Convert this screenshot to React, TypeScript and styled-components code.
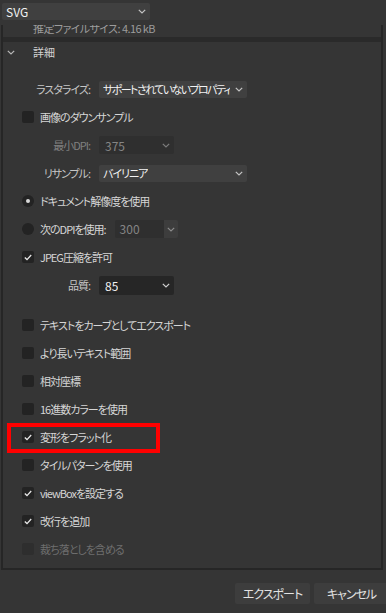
import styled, { createGlobalStyle, css } from "styled-components";

const GlobalStyle = createGlobalStyle`
  html, body {
    margin: 0;
    padding: 0;
    background: #353535;
  }
  body {
    font-family: "Noto Sans CJK JP", "Noto Sans", sans-serif;
    font-size: 11px;
    letter-spacing: -1px;
    font-feature-settings: "palt";
    color: #d6d6d6;
  }
`;

const Chevron = ({ color = "#c4c4c4" }: { color?: string }) => (
  <svg width="8" height="5" viewBox="0 0 8 5">
    <polyline
      points="0.8,0.8 4,4 7.2,0.8"
      fill="none"
      stroke={color}
      strokeWidth="1.2"
    />
  </svg>
);

const Check = () => (
  <svg width="8" height="7" viewBox="0 0 8 7">
    <polyline
      points="0.8,3.6 3,5.6 7.2,1"
      fill="none"
      stroke="#e8e8e8"
      strokeWidth="1.3"
    />
  </svg>
);

type selectVariant = "normal" | "disabled" | "dark";

const checkRows: {
  text: string;
  checked?: boolean;
  disabled?: boolean;
  highlighted?: boolean;
}[] = [
  { text: "テキストをカーブとしてエクスポート" },
  { text: "より長いテキスト範囲" },
  { text: "相対座標" },
  { text: "16進数カラーを使用" },
  { text: "変形をフラット化", checked: true, highlighted: true },
  { text: "タイルパターンを使用" },
  { text: "viewBoxを設定する", checked: true },
  { text: "改行を追加", checked: true },
  { text: "裁ち落としを含める", disabled: true },
];

export default function App() {
  return (
    <Page>
      <GlobalStyle />
      <TopArea>
        <Select width={148} variant="normal">
          <SelectText latin>SVG</SelectText>
          <Chevron />
        </Select>
      </TopArea>

      <Frame>
        <EstimateRow>推定ファイルサイズ: 4.16 kB</EstimateRow>
        <SectionBand />
        <SectionHeader>
          <HeaderChevron>
            <Chevron color="#b8b8b8" />
          </HeaderChevron>
          <SectionTitle>詳細</SectionTitle>
        </SectionHeader>

        <SectionBody>
          <FieldRow>
            <FieldLabel>ラスタライズ:</FieldLabel>
            <Select width={148} variant="normal">
              <SelectText tight>サポートされていないプロパティ</SelectText>
              <Chevron />
            </Select>
          </FieldRow>

          <CheckRow>
            <Box />
            <CheckText>画像のダウンサンプル</CheckText>
          </CheckRow>

          <FieldRow>
            <FieldLabel disabled>最小DPI:</FieldLabel>
            <Select width={75} variant="disabled">
              <SelectText latin>375</SelectText>
              <Chevron color="#7c7c7c" />
            </Select>
          </FieldRow>

          <FieldRow>
            <FieldLabel>リサンプル:</FieldLabel>
            <Select width={148} variant="normal">
              <SelectText>バイリニア</SelectText>
              <Chevron />
            </Select>
          </FieldRow>

          <CheckRow>
            <Radio selected />
            <CheckText>ドキュメント解像度を使用</CheckText>
          </CheckRow>

          <CheckRow>
            <Radio />
            <CheckText>次のDPIを使用:</CheckText>
            <SpinBox>
              <SpinValue>300</SpinValue>
              <SpinButton>
                <Chevron color="#8a8a8a" />
              </SpinButton>
            </SpinBox>
          </CheckRow>

          <CheckRow>
            <Box checked>
              <Check />
            </Box>
            <CheckText>JPEG圧縮を許可</CheckText>
          </CheckRow>

          <FieldRow>
            <FieldLabel>品質:</FieldLabel>
            <Select width={75} variant="dark">
              <SelectText latin>85</SelectText>
              <Chevron color="#d0d0d0" />
            </Select>
          </FieldRow>

          <GroupGap />

          {checkRows.map((item) => (
            <CheckRow key={item.text}>
              <Box checked={item.checked} disabled={item.disabled}>
                {item.checked && <Check />}
              </Box>
              <CheckText disabled={item.disabled}>{item.text}</CheckText>
              {item.highlighted && <Highlight />}
            </CheckRow>
          ))}
        </SectionBody>
      </Frame>

      <Footer>
        <Button>エクスポート</Button>
        <Button>キャンセル</Button>
      </Footer>
    </Page>
  );
}

const Page = styled.div`
  width: 386px;
  height: 613px;
  overflow: hidden;
  display: flex;
  flex-direction: column;
`;

const TopArea = styled.div`
  height: 25px;
  box-sizing: border-box;
  padding: 3px 0 0 2px;
`;

const Select = styled.div<{ width: number; variant: selectVariant }>`
  width: ${(props) => props.width}px;
  height: 17px;
  box-sizing: border-box;
  display: flex;
  align-items: center;
  justify-content: space-between;
  padding: 0 4px 0 4px;
  border-radius: 2px;
  ${(props) =>
    props.variant === "normal" &&
    css`
      background: #404040;
      color: #f2f2f2;
    `}
  ${(props) =>
    props.variant === "disabled" &&
    css`
      background: #2f2f2f;
      color: #858585;
      height: 18px;
      padding-left: 6px;
    `}
  ${(props) =>
    props.variant === "dark" &&
    css`
      background: #262626;
      color: #f0f0f0;
      height: 19px;
      padding-left: 6px;
    `}
`;

const SelectText = styled.span<{ tight?: boolean; latin?: boolean }>`
  line-height: 17px;
  white-space: nowrap;
  overflow: hidden;
  font-size: ${(props) => (props.latin ? "12px" : "11px")};
  letter-spacing: ${(props) =>
    props.tight ? "-1.6px" : props.latin ? "0" : "-1px"};
`;

const Frame = styled.div`
  margin-left: 1px;
  width: 382px;
  height: 545px;
  box-sizing: border-box;
  border: 2px solid #262626;
  border-top: none;
  overflow: hidden;
  display: flex;
  flex-direction: column;
`;

const EstimateRow = styled.div`
  height: 12px;
  flex: none;
  padding-left: 30px;
  line-height: 12px;
  margin-top: -3px;
  color: #9c9c9c;
  letter-spacing: -0.6px;
`;

const SectionBand = styled.div`
  height: 5px;
  flex: none;
  margin-top: 3px;
  background: #2a2a2a;
`;

const SectionHeader = styled.div`
  height: 20px;
  flex: none;
  display: flex;
  align-items: center;
`;

const HeaderChevron = styled.div`
  width: 30px;
  padding-left: 4px;
  box-sizing: border-box;
  display: flex;
  align-items: center;
`;

const SectionTitle = styled.span`
  color: #d2d2d2;
  letter-spacing: 0;
`;

const SectionBody = styled.div`
  padding-top: 13px;
  display: flex;
  flex-direction: column;
`;

const FieldRow = styled.div`
  height: 28px;
  display: flex;
  align-items: center;
  gap: 9px;
`;

const FieldLabel = styled.span<{ disabled?: boolean }>`
  width: 87px;
  text-align: right;
  color: ${(props) => (props.disabled ? "#808080" : "#c6c6c6")};
`;

const CheckRow = styled.div`
  position: relative;
  height: 28px;
  display: flex;
  align-items: center;
  padding-left: 19px;
`;

const Box = styled.div<{ checked?: boolean; disabled?: boolean }>`
  width: 12px;
  height: 12px;
  border-radius: 2px;
  flex: none;
  display: flex;
  align-items: center;
  justify-content: center;
  background: ${(props) => (props.disabled ? "#2e2e2e" : "#232323")};
  margin-right: 6px;
`;

const Radio = styled.div<{ selected?: boolean }>`
  width: 12px;
  height: 12px;
  border-radius: 50%;
  flex: none;
  background: #232323;
  margin-right: 6px;
  display: flex;
  align-items: center;
  justify-content: center;
  &::after {
    content: "";
    display: ${(props) => (props.selected ? "block" : "none")};
    width: 4px;
    height: 4px;
    border-radius: 50%;
    background: #d8d8d8;
  }
`;

const CheckText = styled.span<{ disabled?: boolean }>`
  white-space: nowrap;
  color: ${(props) => (props.disabled ? "#6e6e6e" : "#d6d6d6")};
`;

const SpinBox = styled.div`
  margin-left: 9px;
  display: flex;
  height: 18px;
  border-radius: 2px;
  overflow: hidden;
`;

const SpinValue = styled.div`
  width: 49px;
  box-sizing: border-box;
  padding-left: 5px;
  background: #2f2f2f;
  color: #858585;
  line-height: 18px;
  font-size: 12px;
  letter-spacing: 0;
`;

const SpinButton = styled.div`
  width: 14px;
  background: #3d3d3d;
  display: flex;
  align-items: center;
  justify-content: center;
`;

const GroupGap = styled.div`
  height: 12px;
`;

const Highlight = styled.div`
  position: absolute;
  left: 4px;
  top: 0;
  width: 153px;
  height: 30px;
  box-sizing: border-box;
  border: 4px solid #ff0000;
  pointer-events: none;
`;

const Footer = styled.div`
  display: flex;
  justify-content: flex-end;
  gap: 4px;
  padding-top: 13px;
  margin-right: -3px;
`;

const Button = styled.div`
  width: 75px;
  height: 21px;
  border-radius: 2px;
  background: #3d3d3d;
  color: #e2e2e2;
  font-size: 12px;
  display: flex;
  align-items: center;
  justify-content: center;
`;
